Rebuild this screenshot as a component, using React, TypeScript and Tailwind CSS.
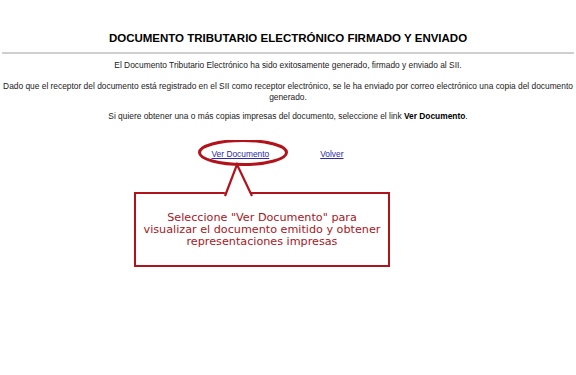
export default function App() {
  return (
    <div className="w-[576px] h-[375px] bg-white overflow-hidden font-['Liberation_Sans',Arial,sans-serif] text-[#111]">
      {/* Header */}
      <h1 className="pt-[31px] text-center text-[11.5px] leading-[14px] font-bold text-black">
        DOCUMENTO TRIBUTARIO ELECTRÓNICO FIRMADO Y ENVIADO
      </h1>
      <div className="mt-[7px] mx-[2px] h-[2px] bg-[#cfcfcf]" />

      {/* Message */}
      <div className="text-center text-[8.4px] leading-[11px] text-[#222]">
        <p className="mt-[6px]">
          El Documento Tributario Electrónico ha sido exitosamente generado, firmado y enviado al SII.
        </p>
        <p className="mt-[10px] whitespace-nowrap">
          Dado que el receptor del documento está registrado en el SII como receptor electrónico, se le ha
          enviado por correo electrónico una copia del documento
          <br />
          generado.
        </p>
        <p className="mt-[8px]">
          Si quiere obtener una o más copias impresas del documento, seleccione el link{" "}
          <b className="text-black">Ver Documento</b>.
        </p>
      </div>

      {/* Links + callout */}
      <div className="relative">
        <div className="mt-[27px] flex justify-center gap-[51px] pr-[21px] text-[8.4px] leading-[11px]">
          <a href="#" className="text-[#2b2ba8] underline">
            Ver Documento
          </a>
          <a href="#" className="text-[#2b2ba8] underline">
            Volver
          </a>
        </div>

        <div className="mt-[32px] ml-[134px] w-[256px] h-[75px] border-2 border-[#b3121b] flex items-center justify-center text-center">
          <p className="font-['DejaVu_Sans',Verdana,sans-serif] text-[11.2px] leading-[12px] text-[#a8161d]">
            Seleccione "Ver Documento" para
            <br />
            visualizar el documento emitido y obtener
            <br />
            representaciones impresas
          </p>
        </div>

        {/* Annotation ellipse and pointer */}
        <svg
          className="absolute left-[190px] top-[-9px] pointer-events-none"
          width="110"
          height="58"
          viewBox="0 0 110 58"
          fill="none"
        >
          <path d="M34 25 L47 25 L62 57 L35 57 Z" fill="white" />
          <path d="M35 56 L47 24.5 L62 56" stroke="#b3121b" strokeWidth="2.2" strokeLinejoin="miter" />
          <ellipse cx="53" cy="12.5" rx="43.5" ry="12" stroke="#b3121b" strokeWidth="3" />
        </svg>
      </div>
    </div>
  );
}
